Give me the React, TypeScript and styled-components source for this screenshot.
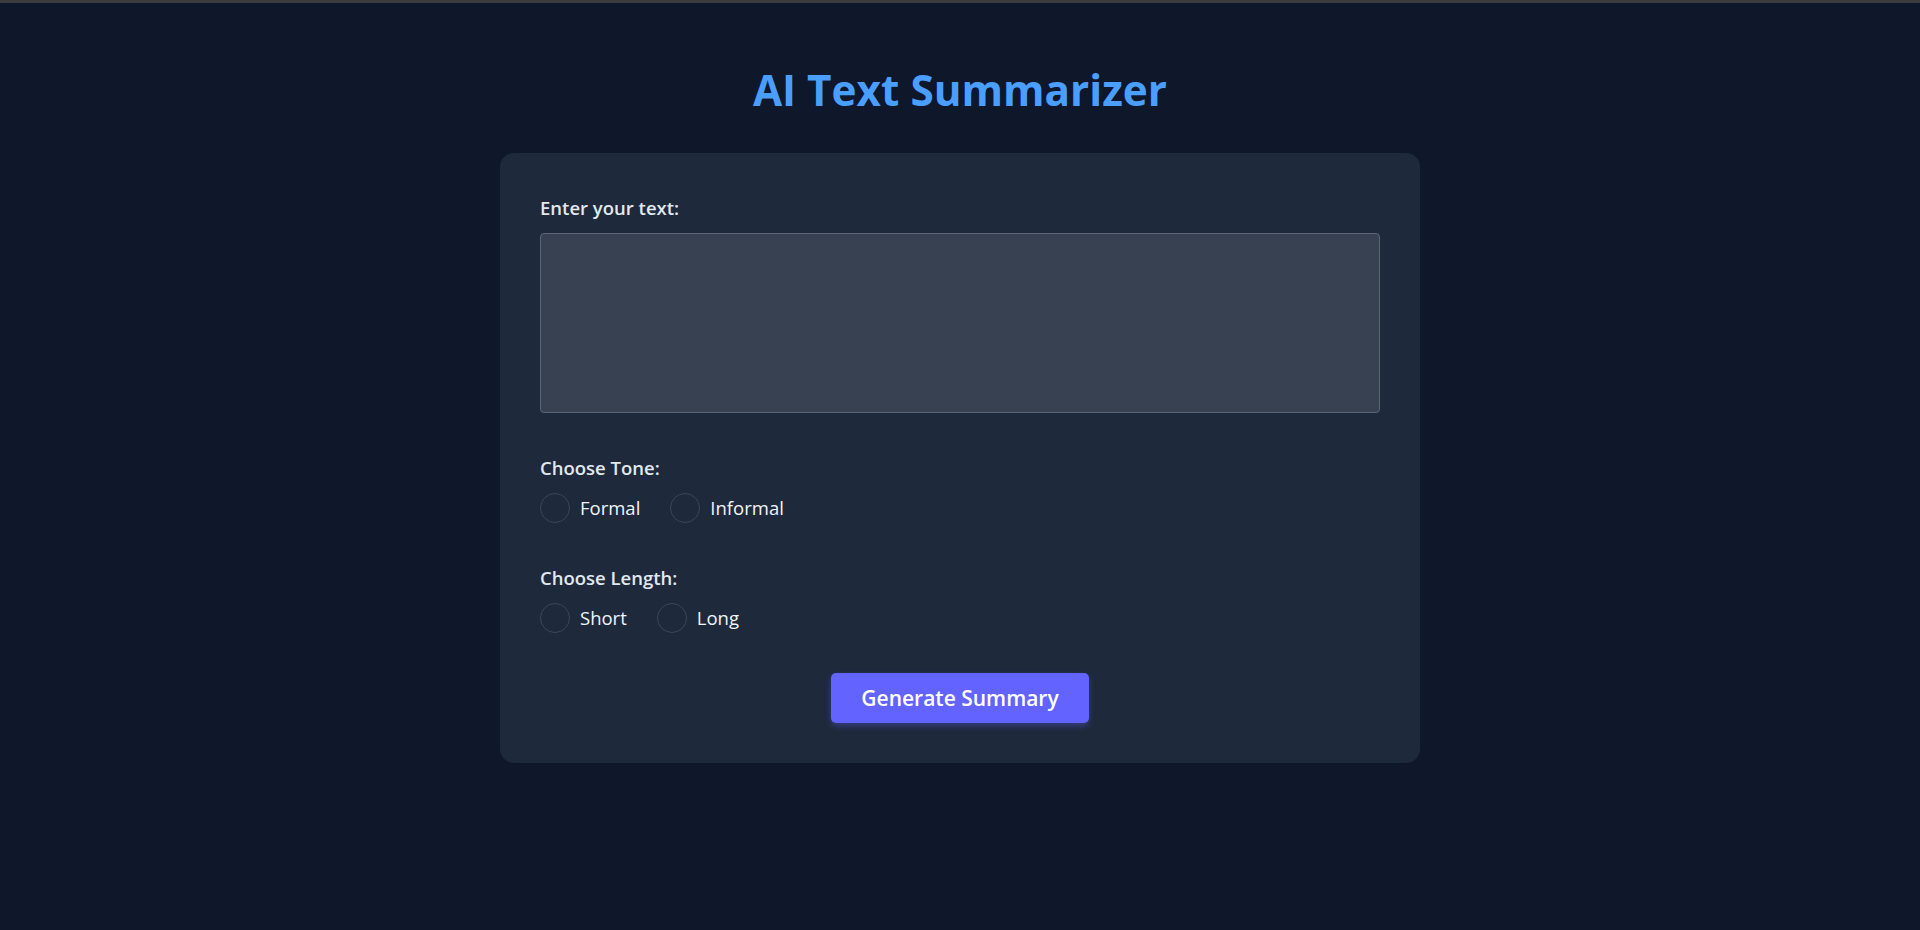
import React, { useState } from "react";
import styled, { createGlobalStyle } from "styled-components";

const GlobalStyle = createGlobalStyle`
  html, body {
    margin: 0;
    padding: 0;
    background: #0f172a;
  }
  body {
    font-family: "Open Sans", "Noto Sans", "Liberation Sans", sans-serif;
    color: #e2e8f0;
  }
  * { box-sizing: border-box; }
`;

const Page = styled.div`
  min-height: 930px;
  border-top: 3px solid #3b3c3e;
  padding-top: 61px;
  display: flex;
  flex-direction: column;
  align-items: center;
`;

const Title = styled.h1`
  margin: 0 0 36px;
  font-size: 42.3px;
  line-height: 52.8px;
  font-weight: 700;
  color: #4a9eff;
  text-align: center;
`;

const Card = styled.form`
  width: 920px;
  background: #1e293b;
  border-radius: 14px;
  padding: 43px 40px 40px;
  display: flex;
  flex-direction: column;
`;

const Group = styled.div<{ $space?: number }>`
  display: flex;
  flex-direction: column;
  gap: 13px;
  margin-bottom: ${(p) => p.$space ?? 43}px;
`;

const Label = styled.label`
  display: block;
  font-size: 18.5px;
  line-height: 24px;
  font-weight: 600;
  color: #e2e8f0;
`;

const TextArea = styled.textarea`
  display: block;
  width: 100%;
  height: 180px;
  margin: 0;
  padding: 10px 12px;
  background: #374151;
  border: 1px solid #5b6577;
  border-radius: 4px;
  color: #f1f5f9;
  font-family: inherit;
  font-size: 18px;
  resize: none;
  outline: none;
`;

const Options = styled.div`
  display: flex;
  align-items: center;
  gap: 30px;
`;

const Option = styled.label`
  display: inline-flex;
  align-items: center;
  gap: 10px;
  font-size: 18.5px;
  line-height: 30px;
  color: #f1f5f9;
  cursor: pointer;
`;

const Radio = styled.input.attrs({ type: "radio" })`
  appearance: none;
  -webkit-appearance: none;
  margin: 0;
  width: 30px;
  height: 30px;
  border: 1px solid #3b4658;
  border-radius: 50%;
  background: transparent;
  cursor: pointer;

  &:checked {
    border-color: #6363ff;
    box-shadow: inset 0 0 0 7px #1e293b;
    background: #6363ff;
  }
`;

const Actions = styled.div`
  display: flex;
  justify-content: center;
`;

const Button = styled.button`
  height: 50px;
  padding: 0 30px;
  border: none;
  border-radius: 5px;
  background: #6363ff;
  color: #ffffff;
  font-family: inherit;
  font-size: 21px;
  font-weight: 600;
  cursor: pointer;
  box-shadow: 0 3px 6px rgba(99, 99, 255, 0.35);
`;

export default function App() {
  const [tone, setTone] = useState("");
  const [length, setLength] = useState("");
  const [text, setText] = useState("");

  return (
    <>
      <GlobalStyle />
      <Page>
        <Title>AI Text Summarizer</Title>
        <Card onSubmit={(e) => e.preventDefault()}>
          <Group>
            <Label htmlFor="text">Enter your text:</Label>
            <TextArea id="text" value={text} onChange={(e) => setText(e.target.value)} />
          </Group>
          <Group>
            <Label as="div">Choose Tone:</Label>
            <Options>
              <Option>
                <Radio name="tone" checked={tone === "formal"} onChange={() => setTone("formal")} />
                Formal
              </Option>
              <Option>
                <Radio name="tone" checked={tone === "informal"} onChange={() => setTone("informal")} />
                Informal
              </Option>
            </Options>
          </Group>
          <Group $space={40}>
            <Label as="div">Choose Length:</Label>
            <Options>
              <Option>
                <Radio name="length" checked={length === "short"} onChange={() => setLength("short")} />
                Short
              </Option>
              <Option>
                <Radio name="length" checked={length === "long"} onChange={() => setLength("long")} />
                Long
              </Option>
            </Options>
          </Group>
          <Actions>
            <Button type="submit">Generate Summary</Button>
          </Actions>
        </Card>
      </Page>
    </>
  );
}
